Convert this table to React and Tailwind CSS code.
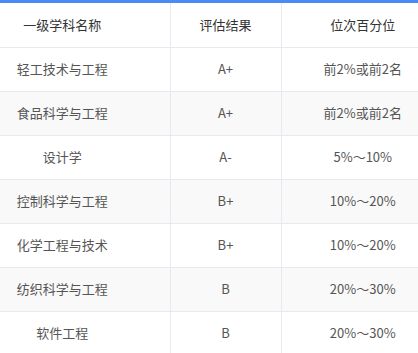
const rows = [
  ['轻工技术与工程', 'A+', '前2%或前2名'],
  ['食品科学与工程', 'A+', '前2%或前2名'],
  ['设计学', 'A-', '5%～10%'],
  ['控制科学与工程', 'B+', '10%～20%'],
  ['化学工程与技术', 'B+', '10%～20%'],
  ['纺织科学与工程', 'B', '20%～30%'],
  ['软件工程', 'B', '20%～30%'],
];

const App = () => {
  return (
    <div
      className="w-[418px] h-[353px] overflow-hidden bg-white border-t-[3px] border-[#4a8af4]"
      style={{ fontFamily: '"Microsoft YaHei", "Noto Sans CJK SC", sans-serif' }}
    >
      <table className="w-[489px] ml-[-45px] table-fixed border-collapse text-[13px] text-center">
        <colgroup>
          <col className="w-[215px]" />
          <col className="w-[111px]" />
          <col className="w-[163px]" />
        </colgroup>
        <thead>
          <tr className="h-[44px] text-[#333]">
            <th className="font-normal border-b border-r border-[#e8e8f0]">一级学科名称</th>
            <th className="font-normal border-b border-r border-[#e8e8f0]">评估结果</th>
            <th className="font-normal border-b border-[#e8e8f0]">位次百分位</th>
          </tr>
        </thead>
        <tbody className="text-[#555]">
          {rows.map((r, i) => (
            <tr key={i} className={i % 2 === 1 ? 'h-[44px] bg-[#f9f9f9]' : 'h-[44px] bg-white'}>
              <td className="border-b border-r border-[#e8e8f0]">{r[0]}</td>
              <td className="border-b border-r border-[#e8e8f0]">{r[1]}</td>
              <td className="border-b border-[#e8e8f0]">{r[2]}</td>
            </tr>
          ))}
        </tbody>
      </table>
    </div>
  );
};

export default App;
